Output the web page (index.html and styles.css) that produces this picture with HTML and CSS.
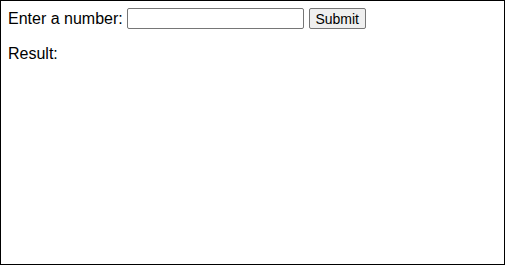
FILE: index.html
```html
<!DOCTYPE html>
<html>
<head>
<meta charset="utf-8">
<link rel="stylesheet" href="styles.css">
</head>
<body>
<div class="frame">
  <div class="row">
    <label class="label" for="num">Enter a number:</label>
    <input class="field" id="num" type="text">
    <button class="btn" type="button">Submit</button>
  </div>
  <p class="result">Result:</p>
</div>
</body>
</html>
```
FILE: styles.css
```css
html, body {
  margin: 0;
  padding: 0;
  background: #fff;
}
.frame {
  box-sizing: border-box;
  width: 505px;
  height: 265px;
  border: 1px solid #000;
  padding: 7px;
  font-family: "Liberation Sans", Arial, sans-serif;
  font-size: 16px;
  color: #000;
}
.row {
  display: flex;
  align-items: center;
  height: 21px;
}
.label {
  margin-right: 4px;
}
.field {
  box-sizing: border-box;
  width: 177px;
  height: 21px;
  border: 1px solid #767676;
  border-radius: 2px;
  padding: 1px 2px;
  margin: 0;
  font-family: "Liberation Sans", Arial, sans-serif;
  font-size: 13px;
}
.btn {
  box-sizing: border-box;
  width: 57px;
  height: 21px;
  margin: 0 0 0 5px;
  padding: 1px 0;
  border: 1px solid #767676;
  border-radius: 2px;
  background: #efefef;
  font-family: "Liberation Sans", Arial, sans-serif;
  font-size: 14px;
  color: #000;
  text-align: center;
}
.result {
  margin: 16px 0 0;
}
```
